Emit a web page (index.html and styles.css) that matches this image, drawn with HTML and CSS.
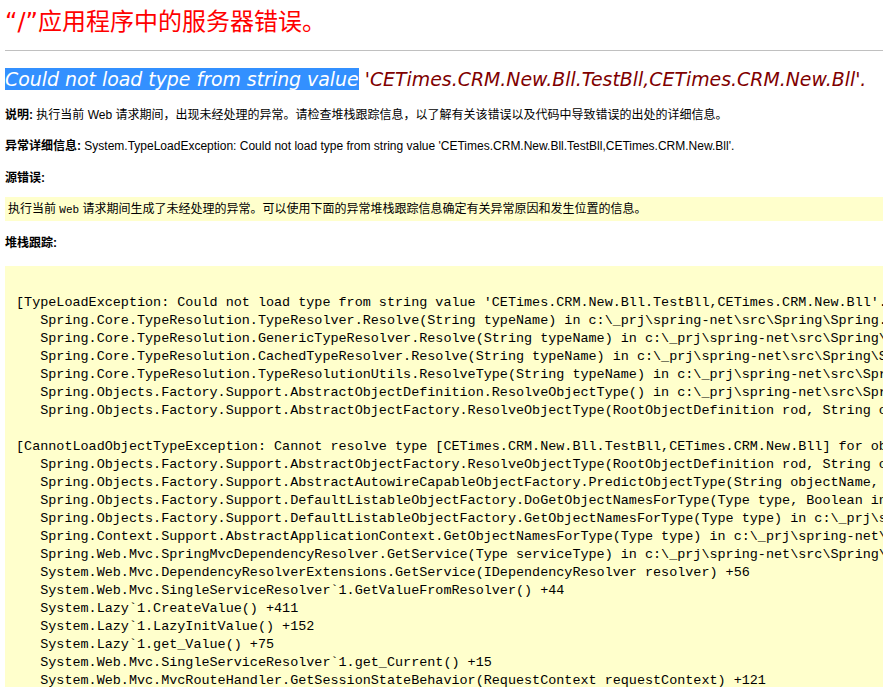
FILE: index.html
```
<!DOCTYPE html>
<html lang="zh-CN">
<head>
    <meta charset="UTF-8">
    <title>Could not load type from string value 'CETimes.CRM.New.Bll.TestBll,CETimes.CRM.New.Bll'.</title>
    <link rel="stylesheet" href="styles.css">
</head>
<body>
    <h1 class="title">“/”应用程序中的服务器错误。</h1>
    <hr class="rule">

    <h2 class="message"><span class="selected">Could not load type from string value</span> 'CETimes.CRM.New.Bll.TestBll,CETimes.CRM.New.Bll'.</h2>

    <p class="info"><b>说明:</b> 执行当前 Web 请求期间，出现未经处理的异常。请检查堆栈跟踪信息，以了解有关该错误以及代码中导致错误的出处的详细信息。</p>

    <p class="info"><b>异常详细信息:</b> System.TypeLoadException: Could not load type from string value 'CETimes.CRM.New.Bll.TestBll,CETimes.CRM.New.Bll'.</p>

    <p class="info source-label"><b>源错误:</b></p>

    <div class="source-box">
        <code>执行当前 <span class="mono">Web</span> 请求期间生成了未经处理的异常。可以使用下面的异常堆栈跟踪信息确定有关异常原因和发生位置的信息。</code>
    </div>

    <p class="info stack-label"><b>堆栈跟踪:</b></p>

    <div class="stack-box">
<pre class="stack">

[TypeLoadException: Could not load type from string value 'CETimes.CRM.New.Bll.TestBll,CETimes.CRM.New.Bll'.]
   Spring.Core.TypeResolution.TypeResolver.Resolve(String typeName) in c:\_prj\spring-net\src\Spring\Spring.Core\Core\TypeResolution\TypeResolver.cs:78
   Spring.Core.TypeResolution.GenericTypeResolver.Resolve(String typeName) in c:\_prj\spring-net\src\Spring\Spring.Core\Core\TypeResolution\GenericTypeResolver.cs:56
   Spring.Core.TypeResolution.CachedTypeResolver.Resolve(String typeName) in c:\_prj\spring-net\src\Spring\Spring.Core\Core\TypeResolution\CachedTypeResolver.cs:107
   Spring.Core.TypeResolution.TypeResolutionUtils.ResolveType(String typeName) in c:\_prj\spring-net\src\Spring\Spring.Core\Core\TypeResolution\TypeResolutionUtils.cs:50
   Spring.Objects.Factory.Support.AbstractObjectDefinition.ResolveObjectType() in c:\_prj\spring-net\src\Spring\Spring.Core\Objects\Factory\Support\AbstractObjectDefinition.cs:1000
   Spring.Objects.Factory.Support.AbstractObjectFactory.ResolveObjectType(RootObjectDefinition rod, String objectName) in c:\_prj\spring-net\src\Spring\Spring.Core\Objects\Factory\Support\AbstractObjectFactory.cs:1053

[CannotLoadObjectTypeException: Cannot resolve type [CETimes.CRM.New.Bll.TestBll,CETimes.CRM.New.Bll] for object with name 'TestBll' defined in 'file [Config\objects.xml]']
   Spring.Objects.Factory.Support.AbstractObjectFactory.ResolveObjectType(RootObjectDefinition rod, String objectName) in c:\_prj\spring-net\src\Spring\Spring.Core\Objects\Factory\Support\AbstractObjectFactory.cs:1062
   Spring.Objects.Factory.Support.AbstractAutowireCapableObjectFactory.PredictObjectType(String objectName, RootObjectDefinition mod) in c:\_prj\spring-net\src\Spring\Spring.Core\Objects\Factory\Support\AbstractAutowireCapableObjectFactory.cs:126
   Spring.Objects.Factory.Support.DefaultListableObjectFactory.DoGetObjectNamesForType(Type type, Boolean includeNonSingletons, Boolean allowEagerInit) in c:\_prj\spring-net\src\Spring\Spring.Core\Objects\Factory\Support\DefaultListableObjectFactory.cs:452
   Spring.Objects.Factory.Support.DefaultListableObjectFactory.GetObjectNamesForType(Type type) in c:\_prj\spring-net\src\Spring\Spring.Core\Objects\Factory\Support\DefaultListableObjectFactory.cs:383
   Spring.Context.Support.AbstractApplicationContext.GetObjectNamesForType(Type type) in c:\_prj\spring-net\src\Spring\Spring.Core\Context\Support\AbstractApplicationContext.cs:1493
   Spring.Web.Mvc.SpringMvcDependencyResolver.GetService(Type serviceType) in c:\_prj\spring-net\src\Spring\Spring.Web.Mvc3\SpringMvcDependencyResolver.cs:80
   System.Web.Mvc.DependencyResolverExtensions.GetService(IDependencyResolver resolver) +56
   System.Web.Mvc.SingleServiceResolver`1.GetValueFromResolver() +44
   System.Lazy`1.CreateValue() +411
   System.Lazy`1.LazyInitValue() +152
   System.Lazy`1.get_Value() +75
   System.Web.Mvc.SingleServiceResolver`1.get_Current() +15
   System.Web.Mvc.MvcRouteHandler.GetSessionStateBehavior(RequestContext requestContext) +121
   System.Web.Mvc.MvcRouteHandler.GetHttpHandler(RequestContext requestContext) +33
   System.Web.Routing.UrlRoutingModule.PostResolveRequestCache(HttpContextBase context) +418
</pre>
    </div>
</body>
</html>
```

FILE: styles.css
```
html, body {
    overflow: hidden;
}

body {
    margin: 0;
    padding: 0 0 0 5px;
    background-color: #fff;
    color: #000;
    font-family: "Liberation Sans", "Noto Sans CJK SC", sans-serif;
    font-size: 12px;
}

.title {
    margin: 7px 0 0;
    font-family: "DejaVu Sans", "Noto Sans CJK SC", sans-serif;
    font-size: 24px;
    font-weight: normal;
    line-height: 30px;
    color: #f00;
}

.rule {
    margin: 13px 0 0;
    border: 0;
    border-top: 1px solid #c0c0c0;
    height: 0;
}

.message {
    margin: 15px 0 0;
    font-family: "DejaVu Sans", "Noto Sans CJK SC", sans-serif;
    font-size: 18.9px;
    font-style: italic;
    font-weight: normal;
    line-height: 26px;
    color: #800000;
    white-space: nowrap;
}

.selected {
    background-color: #3390ff;
    color: #fff;
}

.info {
    margin: 15px 0 0;
    line-height: 16px;
    white-space: nowrap;
}

.info b {
    font-weight: bold;
}

.info.source-label {
    margin-top: 16px;
}

/* 源错误 box */
.source-box {
    margin-top: 11px;
    background-color: #ffffcc;
    height: 24px;
    padding-left: 3px;
    line-height: 24px;
    white-space: nowrap;
}

.source-box code {
    font-family: "Liberation Sans", "Noto Sans CJK SC", sans-serif;
    font-size: 12px;
}

.source-box .mono {
    font-family: "Liberation Mono", monospace;
    font-size: 11px;
}

.info.stack-label {
    margin-top: 14px;
}

/* stack trace */
.stack-box {
    margin-top: 15px;
    background-color: #ffffcc;
    overflow: hidden;
}

.stack {
    margin: 0;
    padding: 10px 0 9px 11px;
    font-family: "Liberation Mono", "DejaVu Sans Mono", monospace;
    font-size: 13.45px;
    line-height: 18px;
    color: #000;
}
```
